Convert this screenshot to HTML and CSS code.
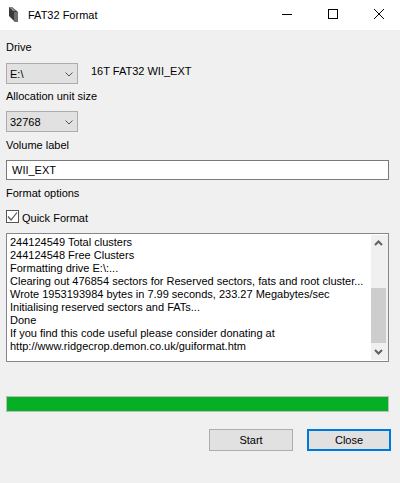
FILE: index.html
```html
<!DOCTYPE html>
<html lang="en">
<head>
  <meta charset="UTF-8">
  <meta name="viewport" content="width=device-width, initial-scale=1.0">
  <title>FAT32 Format</title>
  <link rel="stylesheet" href="styles.css">
</head>
<body>
  <div class="window">
    <div class="titlebar">
      <svg class="app-icon" width="16" height="16" viewBox="0 0 16 16">
        <path d="M1 0 L4 0 L10 5 L10 15 L7 15 L1 9 Z" fill="#3a3a3a"/>
        <path d="M1 0 L4 0 L8 4 L5 4 Z" fill="#8c8c8c"/>
        <path d="M6 5 L10 5 L10 15 L7 15 L6 13 Z" fill="#6e6e6e"/>
      </svg>
      <span class="title">FAT32 Format</span>
      <div class="controls">
        <svg width="46" height="30" viewBox="0 0 46 30"><path d="M20 14.5 H30" stroke="#000" fill="none"/></svg>
        <svg width="46" height="30" viewBox="0 0 46 30"><rect x="20.5" y="9.5" width="9" height="9" stroke="#000" fill="none"/></svg>
        <svg width="46" height="30" viewBox="0 0 46 30"><path d="M20 9 L30 19 M30 9 L20 19" stroke="#000" fill="none"/></svg>
      </div>
    </div>

    <div class="content">
      <label class="label first">Drive</label>
      <div class="drive-row">
        <div class="select"><span>E:\</span><svg width="8" height="5" viewBox="0 0 8 5"><path d="M0.5 0.5 L4 4 L7.5 0.5" stroke="#555" fill="none"/></svg></div>
        <span class="drive-info">16T FAT32 WII_EXT</span>
      </div>

      <label class="label alloc">Allocation unit size</label>
      <div class="select"><span>32768</span><svg width="8" height="5" viewBox="0 0 8 5"><path d="M0.5 0.5 L4 4 L7.5 0.5" stroke="#555" fill="none"/></svg></div>

      <label class="label volume">Volume label</label>
      <div class="textbox">WII_EXT</div>

      <label class="label options">Format options</label>
      <div class="check-row">
        <span class="checkbox"><svg width="11" height="11" viewBox="0 0 11 11"><path d="M1 5.5 L4 9 L10 1.5" stroke="#555" stroke-width="1.2" fill="none"/></svg></span>
        <span class="check-label">Quick Format</span>
      </div>

      <div class="log">
        <div class="log-text">
          <div>244124549 Total clusters</div>
          <div>244124548 Free Clusters</div>
          <div>Formatting drive E:\:...</div>
          <div>Clearing out 476854 sectors for Reserved sectors, fats and root cluster...</div>
          <div>Wrote 1953193984 bytes in 7.99 seconds, 233.27 Megabytes/sec</div>
          <div>Initialising reserved sectors and FATs...</div>
          <div>Done</div>
          <div>If you find this code useful please consider donating at</div>
          <div>http://www.ridgecrop.demon.co.uk/guiformat.htm</div>
        </div>
        <div class="scrollbar">
          <svg width="15" height="17" viewBox="0 0 15 17"><path d="M4 10 L7.5 6.5 L11 10" stroke="#606060" stroke-width="2" fill="none"/></svg>
          <div class="track"><div class="thumb"></div></div>
          <svg width="15" height="17" viewBox="0 0 15 17"><path d="M4 7 L7.5 10.5 L11 7" stroke="#606060" stroke-width="2" fill="none"/></svg>
        </div>
      </div>

      <div class="progress"><div class="progress-fill"></div></div>

      <div class="buttons">
        <button class="btn">Start</button>
        <button class="btn default">Close</button>
      </div>
    </div>
  </div>
</body>
</html>
```

FILE: styles.css
```css
* {
  box-sizing: border-box;
}

body {
  margin: 0;
  font-family: "Liberation Sans", sans-serif;
  font-size: 11px;
  line-height: 13px;
  color: #000;
  background: #f0f0f0;
}

.window {
  width: 400px;
  height: 483px;
  overflow: hidden;
}

.titlebar {
  height: 30px;
  background: #fff;
  display: flex;
  align-items: center;
  padding-left: 8px;
}

.app-icon {
  margin-right: 4px;
  flex: none;
}

.controls {
  display: flex;
  margin-left: auto;
}

.controls svg {
  display: block;
}

.content {
  padding: 0 10px 0 6px;
}

.label {
  display: block;
}

.first {
  margin-top: 11px;
}

.drive-row {
  display: flex;
  margin-top: 9px;
}

.drive-info {
  margin-left: 13px;
  margin-top: 2px;
}

.select {
  width: 72px;
  height: 21px;
  background: #e1e1e1;
  border: 1px solid #adadad;
  display: flex;
  align-items: center;
  justify-content: space-between;
  padding: 1px 4px 0 3px;
}

.alloc {
  margin-top: 6px;
  margin-bottom: 8px;
}

.volume {
  margin-top: 7px;
}

.textbox {
  width: 383px;
  height: 20px;
  margin-top: 8px;
  background: #fff;
  border: 1px solid #7a7a7a;
  padding: 3px 5px;
}

.options {
  margin-top: 7px;
}

.check-row {
  display: flex;
  gap: 3px;
  height: 13px;
  margin-top: 10px;
}

.check-label {
  padding-top: 2px;
}

.checkbox {
  width: 13px;
  height: 13px;
  background: #fff;
  border: 1px solid #555;
  display: flex;
  align-items: center;
  justify-content: center;
}

.log {
  width: 383px;
  height: 129px;
  margin-top: 10px;
  background: #fff;
  border: 1px solid #828790;
  display: flex;
}

.log-text {
  flex: 1;
  min-width: 0;
  padding: 2px 3px;
  white-space: nowrap;
}

.scrollbar {
  width: 17px;
  flex: none;
  background: #f0f0f0;
  margin: 1px 0;
  display: flex;
  flex-direction: column;
  align-items: flex-start;
}

.track {
  flex: 1;
  width: 15px;
  display: flex;
  align-items: flex-end;
}

.thumb {
  width: 15px;
  height: 55px;
  background: #cdcdcd;
}

.progress {
  width: 383px;
  height: 16px;
  margin-top: 34px;
  background: #e6e6e6;
  border: 1px solid #bcbcbc;
}

.progress-fill {
  height: 100%;
  background: #06b025;
}

.buttons {
  display: flex;
  justify-content: flex-end;
  gap: 14px;
  margin-top: 17px;
  width: 385px;
}

.btn {
  width: 84px;
  height: 22px;
  padding: 1px 0 0;
  font: inherit;
  color: #000;
  background: #e1e1e1;
  border: 1px solid #adadad;
}

.default {
  border: 2px solid #0078d7;
  height: 22px;
}
```
